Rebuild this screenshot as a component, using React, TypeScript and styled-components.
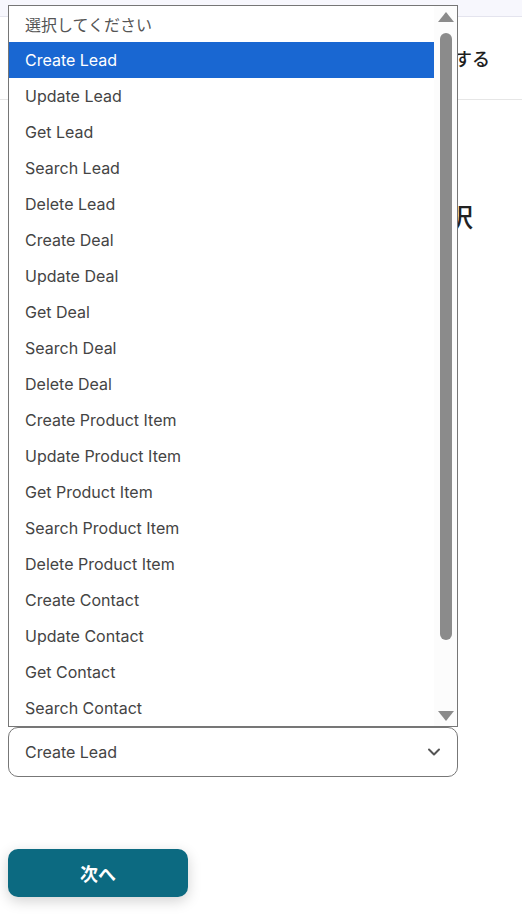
import React from 'react';
import styled, { createGlobalStyle } from 'styled-components';

const GlobalStyle = createGlobalStyle`
  html, body {
    margin: 0;
    padding: 0;
    background: #ffffff;
    font-family: Inter, "Noto Sans CJK JP", sans-serif;
  }
`;

const Page = styled.div`
  position: relative;
  width: 522px;
  height: 924px;
  overflow: hidden;
  background: #ffffff;
`;

const TopBand = styled.div`
  height: 16px;
  background: #f7f7fd;
  border-bottom: 1px solid #e4e4ee;
`;

const TitleRow = styled.div`
  height: 83px;
  display: flex;
  align-items: center;
  justify-content: flex-end;
  padding-right: 32px;
  border-bottom: 1px solid #e6e6e6;
  box-sizing: border-box;
  font-size: 18px;
  font-weight: 500;
  color: #1e1e1e;
`;

const Heading = styled.h2`
  margin: 100px 0 0;
  width: 473px;
  text-align: right;
  font-size: 26px;
  line-height: 36px;
  font-weight: 500;
  color: #222;
`;

const Field = styled.div`
  margin: 491px 0 0 8px;
  width: 450px;
  height: 50px;
  box-sizing: border-box;
  border: 1px solid #777;
  border-radius: 10px;
  display: flex;
  align-items: center;
  justify-content: space-between;
  padding: 0 16px;
  font-size: 16px;
  color: #444;
`;

const NextButton = styled.button`
  margin: 72px 0 0 8px;
  width: 180px;
  height: 48px;
  border: none;
  border-radius: 10px;
  background: #0c6a81;
  color: #fff;
  font-family: Inter, "Noto Sans CJK JP", sans-serif;
  font-size: 18px;
  font-weight: 700;
  box-shadow: 0 4px 14px rgba(0, 0, 0, 0.18);
`;

const Listbox = styled.div`
  position: absolute;
  left: 8px;
  top: 5px;
  width: 450px;
  height: 722px;
  box-sizing: border-box;
  border: 1px solid #767676;
  background: #fff;
  display: flex;
  overflow: hidden;
`;

const Options = styled.div`
  flex: 1;
  overflow: hidden;
`;

const Option = styled.div<{ selected?: boolean; placeholder?: boolean }>`
  height: 36px;
  display: flex;
  align-items: center;
  padding-left: 16px;
  font-size: 16px;
  background: ${({ selected }) => (selected ? '#1967d2' : 'transparent')};
  color: ${({ selected, placeholder }) => (selected ? '#fff' : placeholder ? '#555' : '#444')};
`;

const ScrollTrack = styled.div`
  width: 23px;
  display: flex;
  flex-direction: column;
  align-items: center;
  background: #fcfcfc;
`;

const Arrow = styled.div<{ down?: boolean }>`
  width: 0;
  height: 0;
  margin: ${({ down }) => (down ? '0 0 5px' : '6px 0 0')};
  border-left: 8px solid transparent;
  border-right: 8px solid transparent;
  ${({ down }) => (down ? 'border-top: 10px solid #8b8b8b;' : 'border-bottom: 10px solid #8b8b8b;')}
`;

const ThumbArea = styled.div`
  flex: 1;
  width: 100%;
  display: flex;
  justify-content: center;
  padding-top: 11px;
`;

const Thumb = styled.div`
  width: 12px;
  height: 607px;
  border-radius: 6px;
  background: #8b8b8b;
`;

const items = [
  'Create Lead',
  'Update Lead',
  'Get Lead',
  'Search Lead',
  'Delete Lead',
  'Create Deal',
  'Update Deal',
  'Get Deal',
  'Search Deal',
  'Delete Deal',
  'Create Product Item',
  'Update Product Item',
  'Get Product Item',
  'Search Product Item',
  'Delete Product Item',
  'Create Contact',
  'Update Contact',
  'Get Contact',
  'Search Contact',
];

const Chevron = () => (
  <svg width="14" height="14" viewBox="0 0 14 14" fill="none">
    <path d="M2 4.5 L7 9.5 L12 4.5" stroke="#555" strokeWidth="2" strokeLinecap="round" strokeLinejoin="round" />
  </svg>
);

export default function App() {
  return (
    <Page>
      <GlobalStyle />
      <TopBand />
      <TitleRow>アクションを設定する</TitleRow>
      <Heading>アクションを選択</Heading>
      <Field>
        <span>Create Lead</span>
        <Chevron />
      </Field>
      <NextButton>次へ</NextButton>
      <Listbox>
        <Options>
          <Option placeholder>選択してください</Option>
          {items.map((it) => (
            <Option key={it} selected={it === 'Create Lead'}>
              {it}
            </Option>
          ))}
        </Options>
        <ScrollTrack>
          <Arrow />
          <ThumbArea>
            <Thumb />
          </ThumbArea>
          <Arrow down />
        </ScrollTrack>
      </Listbox>
    </Page>
  );
}
